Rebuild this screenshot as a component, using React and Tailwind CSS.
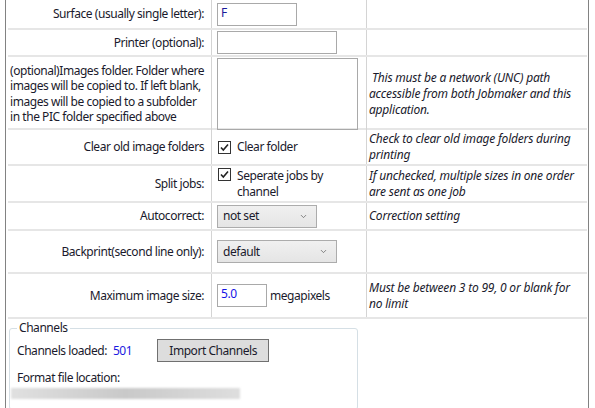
import { ChevronDown } from 'lucide-react';

const font = { fontFamily: '"Noto Sans", "Open Sans", sans-serif' };

const Check = () => (
  <span className="flex h-[13px] w-[13px] shrink-0 items-center justify-center border border-[#333] bg-white">
    <svg width="11" height="11" viewBox="0 0 11 11">
      <path d="M2 5.5 L4.3 8 L9 2.5" fill="none" stroke="#222" strokeWidth="1.6" />
    </svg>
  </span>
);

const Select = ({ value, width }) => (
  <div className={`flex h-[23px] ${width} items-center justify-between border border-[#acacac] bg-gradient-to-b from-[#f0f0f0] to-[#e5e5e5] pl-[5px] pr-[8px]`}>
    <span>{value}</span>
    <ChevronDown size={9} strokeWidth={2} className="text-[#606060]" />
  </div>
);

const Lines = ({ lines, className = '' }) => (
  <div className={`whitespace-nowrap ${className}`}>
    {lines.map((l) => (
      <div key={l}>{l}</div>
    ))}
  </div>
);

const Row = ({ label, left = false, children, note, h }) => (
  <div className={`grid grid-cols-[204px_155px_1fr] border-b-2 border-[#e6e6e6] ${h}`}>
    <div className={`flex items-center border-r border-[#d4d4d4] pr-[7px] ${left ? 'justify-start pl-[2px]' : 'justify-end text-right'}`}>
      {label}
    </div>
    <div className="flex items-center border-r border-[#d4d4d4] pl-[5px]">{children}</div>
    <div className="flex items-center pl-[2px] italic tracking-[-0.2px]">{note}</div>
  </div>
);

export default function App() {
  return (
    <div className="h-[408px] w-[595px] overflow-hidden bg-white text-[12px] leading-[16px] tracking-[-0.45px] text-[#1a1a2c]" style={font}>
      <div className="ml-[5px] h-full w-[584px] border-x border-[#828282] pl-[2px] pr-[1px]">
        <Row label="Surface (usually single letter):" h="h-[30px]">
          <div className="flex h-[23px] w-[80px] items-start border border-[#a9a9a9] pl-[3px] pt-[1px] text-[#1a1a9a]">F</div>
        </Row>
        <Row label="Printer (optional):" h="h-[27px]">
          <div className="h-[23px] w-[120px] border border-[#a9a9a9]" />
        </Row>
        <Row
          h="h-[73px]"
          left
          label={
            <Lines
              className="leading-[15.5px]"
              lines={[
                '(optional)Images folder. Folder where',
                'images will be copied to. If left blank,',
                'images will be copied to a subfolder',
                'in the PIC folder specified above',
              ]}
            />
          }
          note={
            <Lines
              lines={[
                '\u00a0This must be a network (UNC) path',
                'accessible from both Jobmaker and this',
                'application.',
              ]}
            />
          }
        >
          <div className="mt-[1px] h-[72px] w-[141px] self-start border border-[#a9a9a9]" />
        </Row>
        <Row
          label="Clear old image folders"
          h="h-[36px]"
          note={<Lines lines={['Check to clear old image folders during', 'printing']} />}
        >
          <div className="flex items-center gap-[6px] pl-[1px]">
            <Check />
            <span>Clear folder</span>
          </div>
        </Row>
        <Row
          label="Split jobs:"
          h="h-[37px]"
          note={<Lines lines={['If unchecked, multiple sizes in one order', 'are sent as one job']} />}
        >
          <div className="flex items-start gap-[6px] pl-[1px]">
            <Check />
            <Lines lines={['Seperate jobs by', 'channel']} />
          </div>
        </Row>
        <Row label="Autocorrect:" h="h-[28px]" note="Correction setting">
          <Select value="not set" width="w-[100px]" />
        </Row>
        <Row label="Backprint(second line only):" h="h-[43px]">
          <Select value="default" width="w-[120px]" />
        </Row>
        <Row
          label="Maximum image size:"
          h="h-[45px]"
          note={<Lines lines={['Must be between 3 to 99, 0 or blank for', 'no limit']} />}
        >
          <div className="flex items-center gap-[3px]">
            <div className="h-[23px] w-[50px] border border-[#a9a9a9] pl-[3px] pt-[1px] text-[#1414e6]">5.0</div>
            <span>megapixels</span>
          </div>
        </Row>
        <fieldset className="mt-[1px] ml-[1px] h-[90px] w-[349px] rounded-[3px] border border-[#d5dfe5] px-[7px]">
          <legend className="px-[2px]">Channels</legend>
          <div className="mt-[3px] flex items-center">
            <span>Channels loaded:</span>
            <span className="ml-[6px] text-[#1a1ae0]">501</span>
            <button className="ml-[25px] h-[23px] w-[112px] border border-[#707070] bg-[#dddddd]">Import Channels</button>
          </div>
          <div className="mt-[8px]">Format file location:</div>
          <div className="-ml-[6px] mt-[2px] h-[11px] w-[229px] bg-gradient-to-r from-[#e0e0e0] via-[#c9c9c9] to-[#dedede] blur-[1px]" />
        </fieldset>
      </div>
    </div>
  );
}
